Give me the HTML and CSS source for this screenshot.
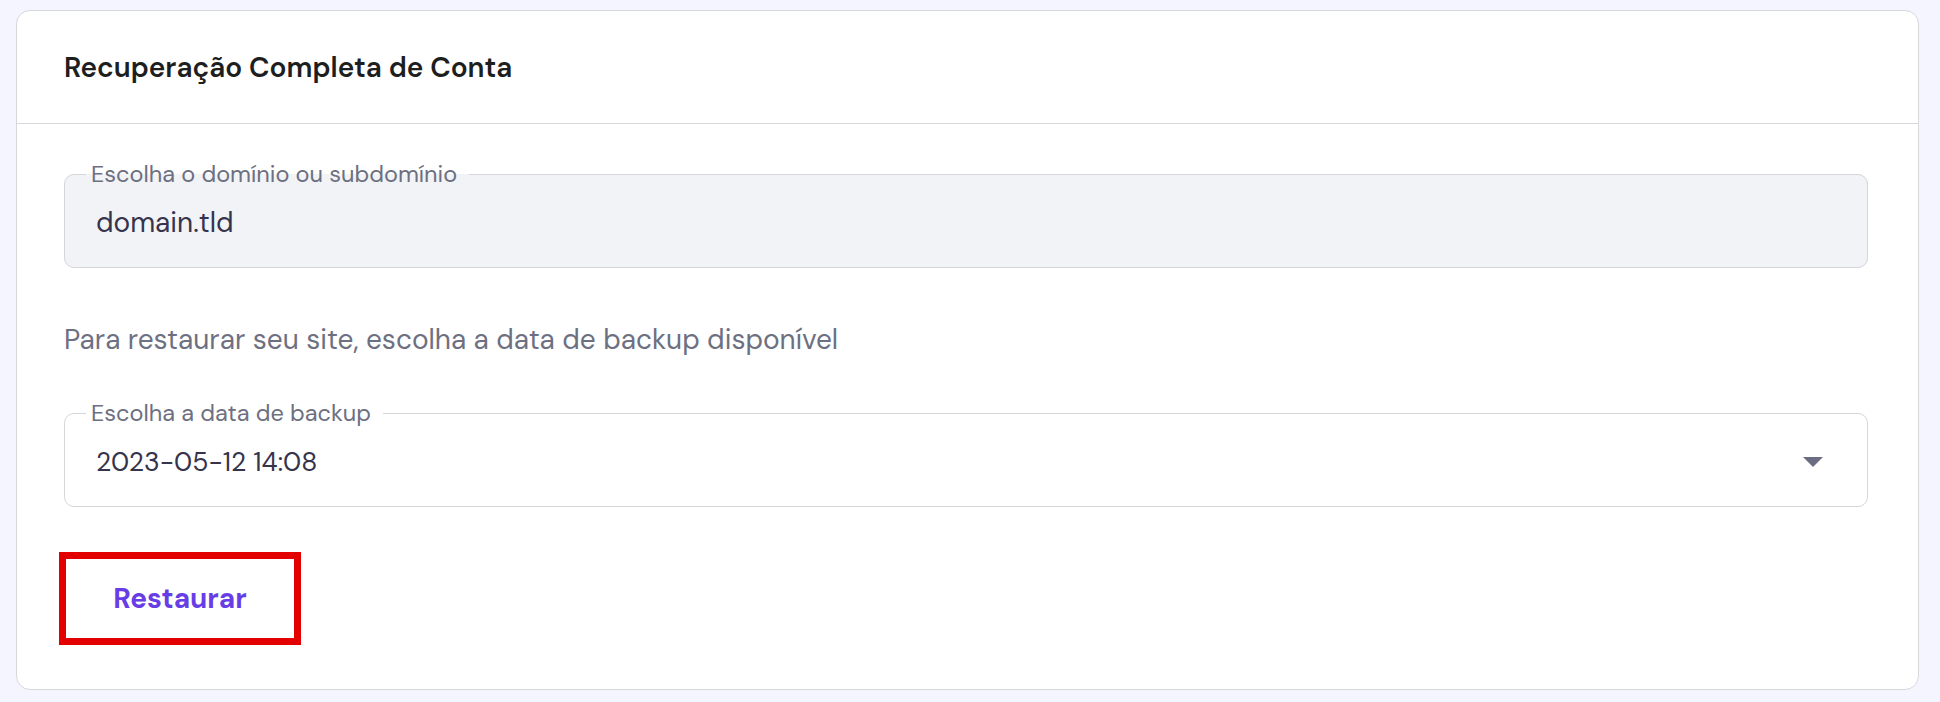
FILE: index.html
```html
<!DOCTYPE html>
<html lang="pt-BR">
<head>
<meta charset="utf-8">
<title>Recuperação Completa de Conta</title>
<link rel="stylesheet" href="styles.css">
</head>
<body>
<main class="page">
  <section class="card">
    <header class="card-header">
      <h2 class="card-title">Recuperação Completa de Conta</h2>
    </header>
    <div class="card-body">
      <fieldset class="field field-disabled">
        <legend class="field-label">Escolha o domínio ou subdomínio</legend>
        <div class="field-value">domain.tld</div>
      </fieldset>

      <p class="helper">Para restaurar seu site, escolha a data de backup disponível</p>

      <fieldset class="field field-select">
        <legend class="field-label">Escolha a data de backup</legend>
        <div class="field-value select-row">
          <span class="date-value">2023-05-12 14:08</span>
          <svg class="caret" width="20" height="10" viewBox="0 0 20 10" aria-hidden="true"><path d="M0 0 H20 L10 10 Z" fill="#6c6c82"/></svg>
        </div>
      </fieldset>

      <button class="btn-restore" type="button">Restaurar</button>
    </div>
  </section>
</main>
</body>
</html>
```

FILE: styles.css
```css
* { box-sizing: border-box; }
html, body { margin: 0; padding: 0; }
body {
  background: #f4f5ff;
  font-family: "DM Sans", Inter, "Noto Sans", sans-serif;
  width: 1940px;
  height: 702px;
  overflow: hidden;
}
.page {
  padding: 10px 21px 0 16px;
}
.card {
  background: #ffffff;
  border: 1px solid #d6d8dc;
  border-radius: 14px;
  height: 680px;
  display: flex;
  flex-direction: column;
}
.card-header {
  height: 113px;
  border-bottom: 1px solid #d6d8dc;
  display: flex;
  align-items: center;
  padding: 0 47px;
}
.card-title {
  margin: 0;
  font-size: 28px;
  font-weight: 600;
  color: #1d1e20;
  letter-spacing: 0;
}
.card-body {
  padding: 38px 50px 0 47px;
  display: flex;
  flex-direction: column;
  align-items: flex-start;
}
.field {
  width: 100%;
  margin: 0;
  padding: 0 31px;
  border: 1px solid #d4d6da;
  border-radius: 10px;
  min-width: 0;
}
.field-disabled { background: #f2f3f6; }
.field-select { background: #ffffff; margin-top: 45px; }
.field-label {
  margin-left: -10px;
  padding: 0 12px 0 5px;
  font-size: 23.5px;
  line-height: 24px;
  color: #6d7081;
}
.field-value {
  height: 32px;
  line-height: 32px;
  margin: 21px 0 28px;
  font-size: 28px;
  color: #36344d;
}
.date-value { font-size: 26.5px; }
.select-row {
  display: flex;
  align-items: center;
  justify-content: space-between;
  padding-right: 13px;
}
.caret { display: block; }
.helper {
  margin: 56px 0 0;
  font-size: 28px;
  line-height: 32px;
  color: #6d7081;
}
.btn-restore {
  margin: 45px 0 0 -5px;
  width: 242px;
  height: 93px;
  border: 7px solid #e30000;
  background: #ffffff;
  font-family: inherit;
  font-size: 28px;
  font-weight: 700;
  color: #673de6;
  cursor: pointer;
  padding: 0;
}
```
